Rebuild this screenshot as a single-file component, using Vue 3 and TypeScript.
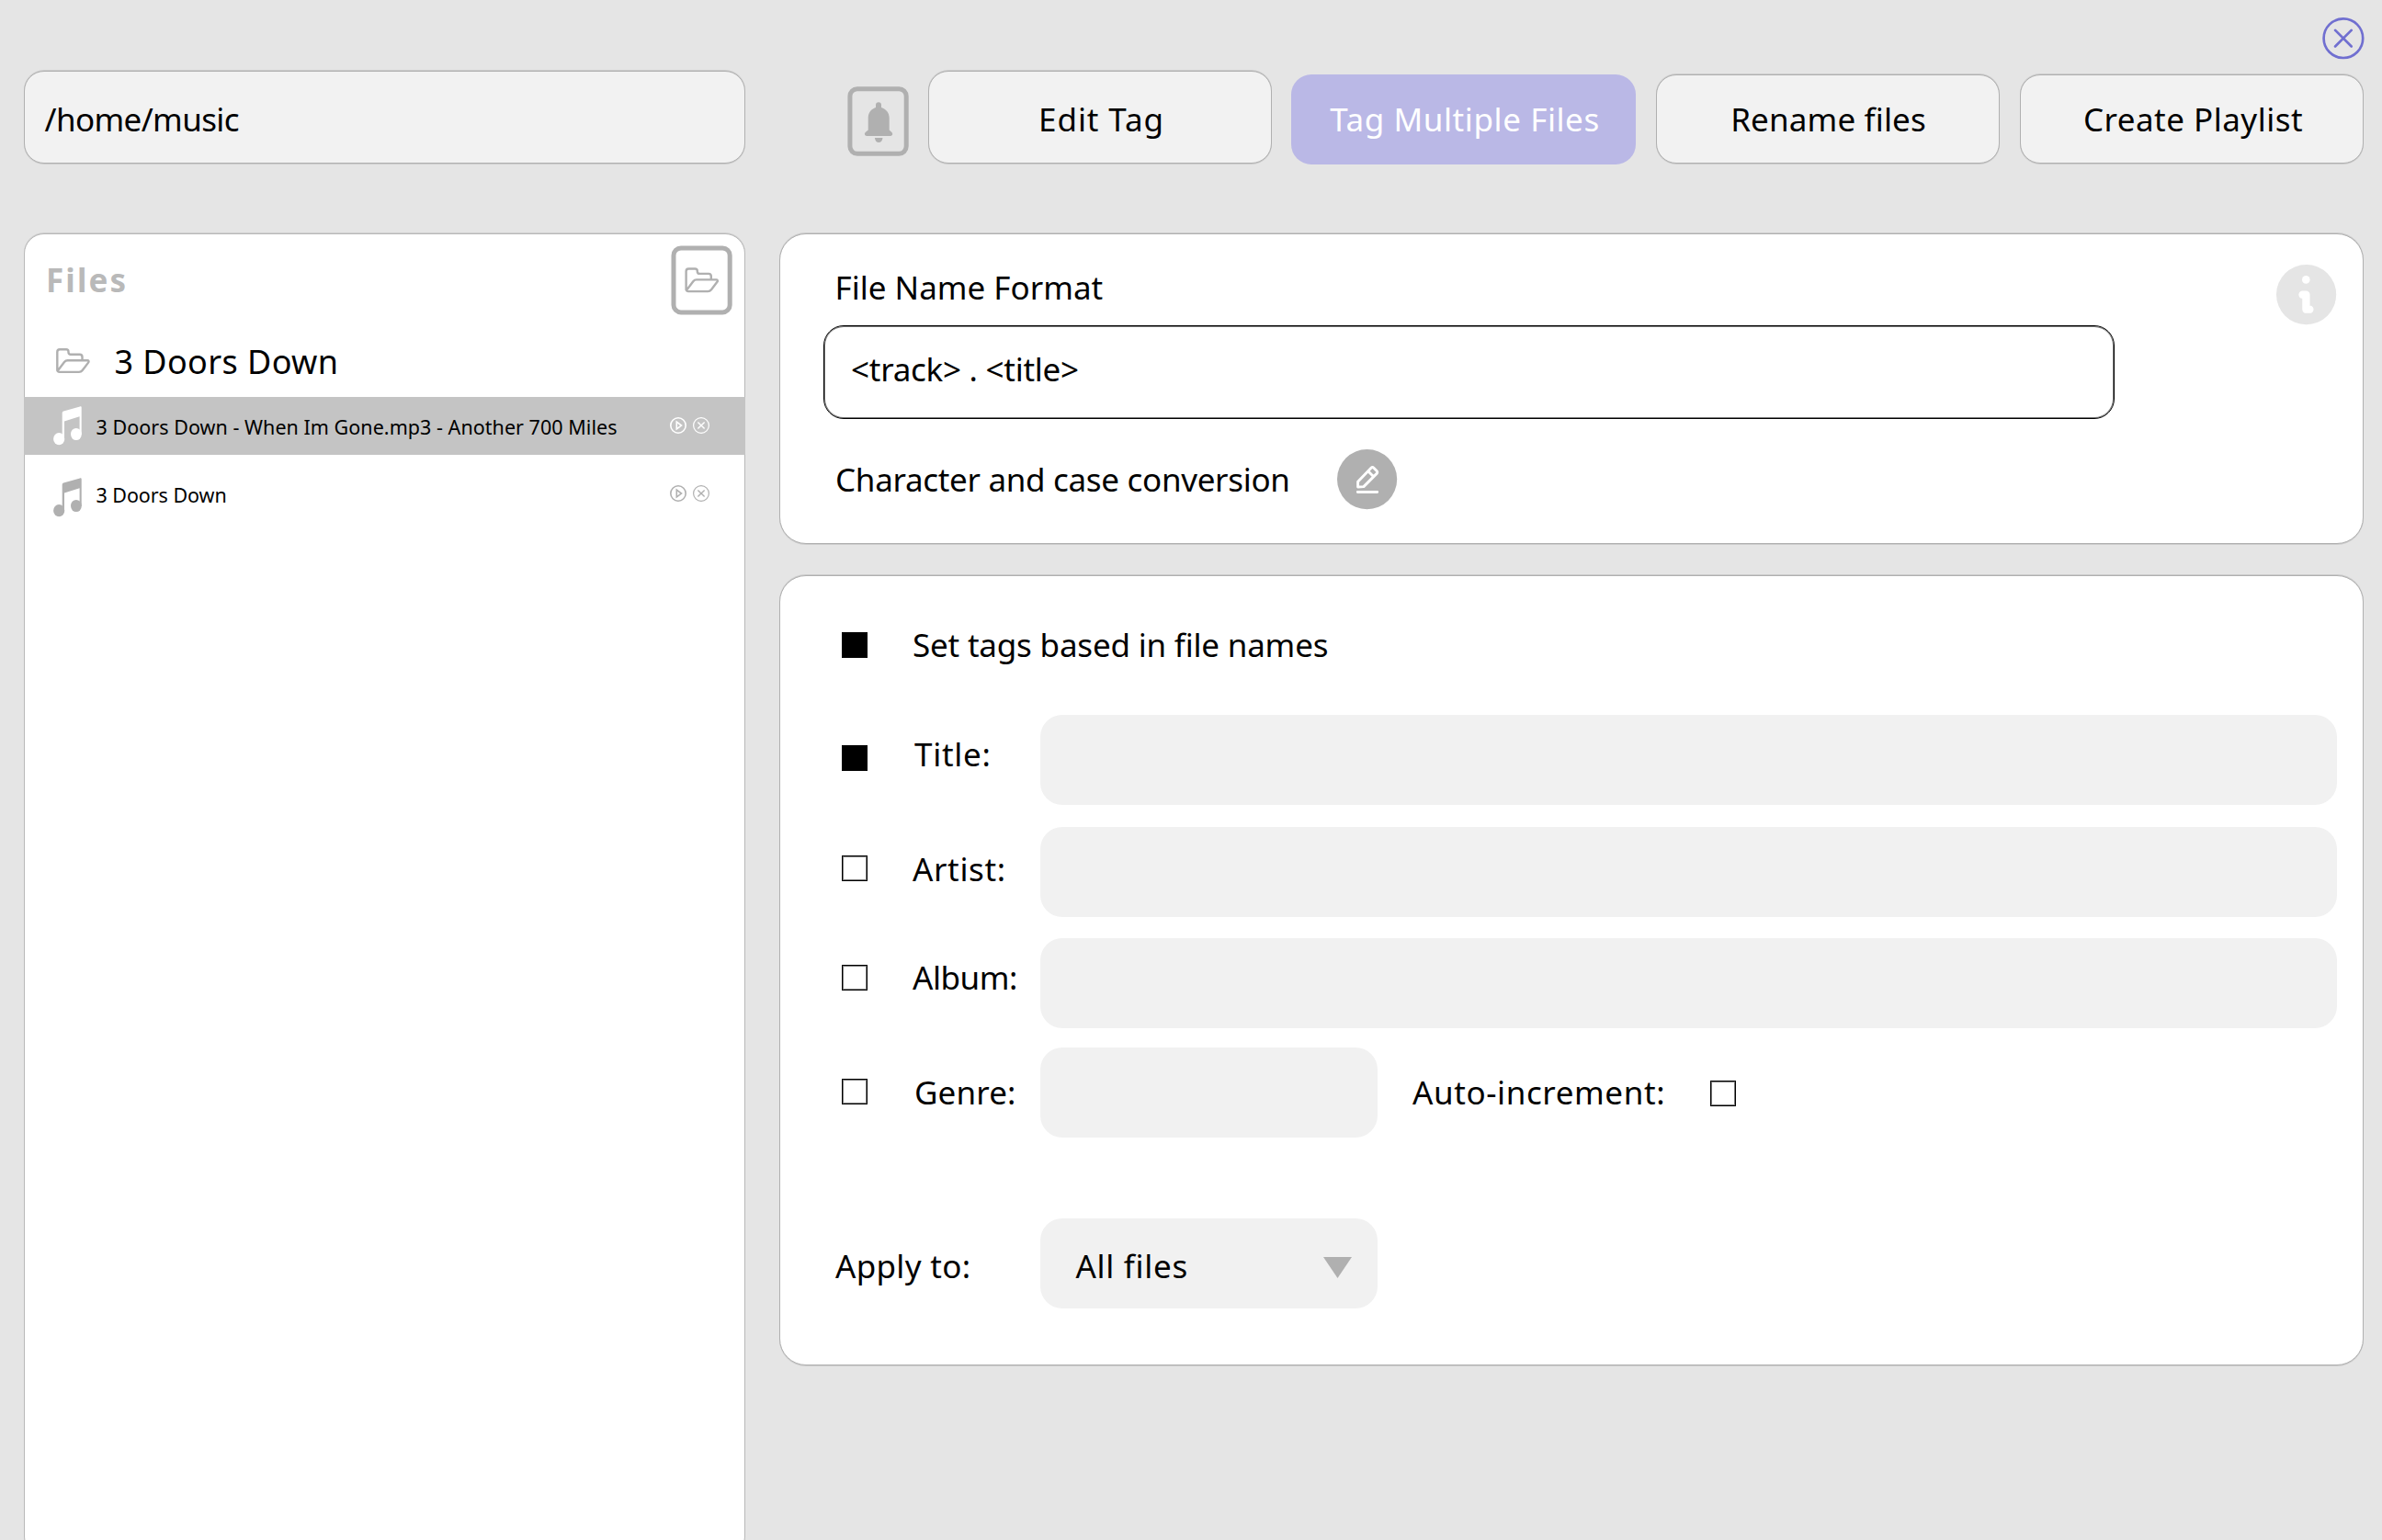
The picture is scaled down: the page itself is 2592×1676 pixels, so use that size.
<script setup lang="ts">
import { ref } from 'vue'

interface Tab {
  id: string
  label: string
}

interface Song {
  id: string
  name: string
}

interface TagField {
  id: string
  label: string
  checked: boolean
}

const path = ref('/home/music')
const format = ref('<track> . <title>')
const activeTab = ref('multi')
const selectedSong = ref('gone')

const tabs: Tab[] = [
  { id: 'edit', label: 'Edit Tag' },
  { id: 'multi', label: 'Tag Multiple Files' },
  { id: 'rename', label: 'Rename files' },
  { id: 'playlist', label: 'Create Playlist' },
]

const songs: Song[] = [
  { id: 'gone', name: '3 Doors Down - When Im Gone.mp3 - Another 700 Miles' },
  { id: 'down', name: '3 Doors Down' },
]

const fields = ref<TagField[]>([
  { id: 'title', label: 'Title:', checked: true },
  { id: 'artist', label: 'Artist:', checked: false },
  { id: 'album', label: 'Album:', checked: false },
])

const folderPath =
  'M1.3 24.5V4c0-1.6 1-2.7 2.7-2.7h7c1.6 0 2.5.9 2.5 2.5v.6c0 1.6.9 2.3 2.3 2.3h10c1.8 0 2.7 1 2.7 2.7v4M2 24.2l7-9.1c1-1.3 2-1.9 3.6-1.9H34c1.6 0 2 1.2 1.1 2.4l-6.4 8.4c-1 1.3-2.1 1.9-3.7 1.9H3.8c-1.6 0-2.5-.9-2.5-2.5'
</script>

<template>
  <div class="app">
    <header class="titlebar">
      <svg class="close" width="46" height="46" viewBox="0 0 46 46">
        <circle cx="22.9" cy="22.7" r="21.3" />
        <path d="M14.1 13.9l17.6 17.6M31.7 13.9L14.1 31.5" />
      </svg>
    </header>

    <nav class="toolbar">
      <div class="path ring">{{ path }}</div>
      <svg class="bell" width="67" height="76" viewBox="0 0 67 76">
        <rect x="2.9" y="2.7" width="61.3" height="70.6" rx="8" />
        <path
          d="M31 23v-2.7a3 3 0 0 1 6 0V23c5.3 1.6 8.7 6 8.7 11.500v13l2.7 2.6c1.6 1.6.6 3.9-1.3 3.9H21c-1.9 0-2.9-2.3-1.3-3.9l3-2.6v-13c0-5.500 3.2-10 8.3-11.500zM29.9 56h8.6c-.3 3-1.9 5-4.3 5s-4-2-4.3-5z"
        />
      </svg>
      <div
        v-for="tab in tabs"
        :key="tab.id"
        class="tab"
        :class="[tab.id, tab.id === activeTab ? 'active' : 'ring']"
      >
        {{ tab.label }}
      </div>
    </nav>

    <main class="main">
      <aside class="files">
        <div class="files-head">
          <h2>Files</h2>
          <svg class="open" width="67" height="76" viewBox="0 0 67 76">
            <rect x="3" y="2.9" width="61.2" height="70" rx="8" />
            <path transform="translate(15.3 24.2)" :d="folderPath" />
          </svg>
        </div>
        <div class="folder">
          <svg width="38" height="28" viewBox="0 0 38 28"><path :d="folderPath" /></svg>
          <span>3 Doors Down</span>
        </div>
        <div v-for="song in songs" :key="song.id" class="song" :class="{ selected: song.id === selectedSong }">
          <svg class="note" width="31" height="43" viewBox="0 0 31 43">
            <path d="M9.7 7.500c0-1 .5-1.7 1.500-2.1L29 .4c1-.3 1.7.2 1.7 1.2V31h-2.1V11.3L12 16.500V36H9.7z" />
            <ellipse cx="24.9" cy="30.500" rx="5.9" ry="6.6" />
            <ellipse cx="6.2" cy="35.7" rx="6.1" ry="6.6" />
          </svg>
          <span class="name">{{ song.name }}</span>
          <span class="actions">
            <svg width="18" height="18" viewBox="0 0 18 18">
              <circle cx="9" cy="9" r="8.2" stroke-width="1.6" />
              <path stroke-width="1.6" d="M7.3 5.2v7.8l5.2-3.9z" />
            </svg>
            <svg width="18" height="18" viewBox="0 0 18 18">
              <circle cx="9" cy="9" r="8.4" stroke-width="1.2" />
              <path stroke-width="1.400" d="M5.4 5.4l7.2 7.2M12.6 5.4l-7.2 7.2" />
            </svg>
          </span>
        </div>
      </aside>

      <section class="cards">
        <div class="card ring format-card">
          <div class="format-col">
            <div class="label format-label">File Name Format</div>
            <div class="format-input">{{ format }}</div>
            <div class="convert">
              <span class="label">Character and case conversion</span>
              <svg width="66" height="66" viewBox="0 0 66 66">
                <circle cx="32.6" cy="32.6" r="32.6" fill="#b0b0b0" />
                <path
                  class="pencil"
                  d="M22.6 41v-5.8L37 20.3c.9-.9 2-.9 2.9 0l3.2 3.2c.9.9.9 2 0 2.9L28.9 40.6zM33.7 23.7l6 6M22.3 46.500h21.4"
                />
              </svg>
            </div>
          </div>
          <svg class="info" width="66" height="66" viewBox="0 0 66 66">
            <circle cx="32.6" cy="32.6" r="32.6" fill="#e5e5e5" />
            <circle cx="32.3" cy="16.4" r="4.3" fill="#fff" />
            <path d="M28.500 32.7h3.9v16h4" />
          </svg>
        </div>

        <div class="card ring tags-card">
          <div class="row based">
            <span class="check on"></span>
            <span class="label">Set tags based in file names</span>
          </div>
          <div v-for="field in fields" :key="field.id" class="row" :class="field.id">
            <span class="check" :class="{ on: field.checked }"></span>
            <span class="label">{{ field.label }}</span>
            <div class="field"></div>
          </div>
          <div class="row genre">
            <span class="check"></span>
            <span class="label">Genre:</span>
            <div class="field short"></div>
            <span class="label auto">Auto-increment:</span>
            <span class="check auto-check"></span>
          </div>
          <div class="row apply">
            <span class="label">Apply to:</span>
            <div class="field short select">
              <span>All files</span>
              <svg width="31" height="23" viewBox="0 0 31 23"><path d="M0 0h31L15.500 23z" /></svg>
            </div>
          </div>
        </div>
      </section>
    </main>
  </div>
</template>

<style>
body {
  background: #e5e5e5;
}
</style>

<style scoped>
.app {
  box-sizing: border-box;
  width: 2592px;
  height: 1676px;
  overflow: hidden;
  background: #e5e5e5;
  color: #000;
  font: 35px/50px "Noto Sans", "Open Sans", sans-serif;
  white-space: nowrap;
}
.app * {
  box-sizing: border-box;
}
svg {
  display: block;
  flex: none;
}
.ring {
  border: 1px solid #b0b0b0;
  box-shadow: 0 1px 0 #cccccc, 0 -1px 0 #cccccc;
}

.titlebar {
  display: flex;
  justify-content: flex-end;
  height: 77px;
  padding: 19px 19px 0 0;
}
.close {
  fill: none;
  stroke: #706fd0;
  stroke-width: 2.7;
  stroke-linecap: round;
}

.toolbar {
  display: flex;
  align-items: flex-start;
  height: 177px;
  padding-left: 26px;
}
.path {
  width: 785px;
  height: 101px;
  padding: 27px 0 0 21.5px;
  border-radius: 22px;
  background: #f2f2f2;
  letter-spacing: -0.62px;
}
.bell {
  margin: 17px 21px 0 111px;
  fill: #b0b0b0;
}
.bell rect,
.open rect {
  fill: none;
  stroke: #b0b0b0;
  stroke-width: 5;
}
.tab {
  width: 374px;
  height: 97px;
  margin: 4px 22px 0 0;
  padding: 23px 0 0 1px;
  border-radius: 22px;
  background: #f2f2f2;
  text-align: center;
}
.tab.edit {
  height: 101px;
  margin: 0 21px 0 0;
  padding: 27px 0 0 3px;
  letter-spacing: 0.9px;
}
.tab.active {
  width: 375px;
  height: 98px;
  padding: 24px 0 0 3px;
  background: #bab8e6;
  color: #fff;
}
.tab.multi {
  letter-spacing: 0.58px;
}
.tab.rename {
  letter-spacing: 0.15px;
}
.tab.playlist {
  margin-right: 0;
  padding-left: 3px;
  letter-spacing: 0.49px;
}

.main {
  display: flex;
  align-items: flex-start;
  padding-left: 26px;
}
.files {
  width: 785px;
  height: 1440px;
  margin-right: 37px;
  border: 1px solid #b8b8b8;
  border-radius: 22px;
  box-shadow: 0 -1px 0 #cfcfcf;
  background: #fff;
}
.files-head {
  display: flex;
  justify-content: space-between;
  height: 90px;
  padding: 11.5px 13px 0 23px;
}
.files-head h2 {
  margin: 13.5px 0 0;
  font-size: 35px;
  line-height: 50px;
  color: #b9b9b9;
  letter-spacing: 2.1px;
}
.open path,
.folder path {
  fill: none;
  stroke: #b0b0b0;
  stroke-width: 2.4;
  stroke-linejoin: round;
}
.folder {
  display: flex;
  align-items: flex-start;
  gap: 25.5px;
  height: 87px;
  padding: 24px 0 0 34px;
  font-size: 36px;
  letter-spacing: 0.4px;
}
.folder svg {
  margin-top: 10px;
}
.song {
  display: flex;
  align-items: flex-start;
  height: 63px;
  margin: 0 -1px 10px;
  padding: 0 39px 0 32px;
  font-size: 21.5px;
  line-height: 30px;
}
.song.selected {
  background: #c4c4c4;
}
.note {
  margin-top: 15px;
  fill: #b0b0b0;
}
.selected .note {
  margin-top: 10px;
  fill: #fff;
}
.name {
  flex: 1;
  margin: 19px 0 0 15.5px;
  letter-spacing: -0.06px;
}
.selected .name {
  margin-top: 18px;
  letter-spacing: 0.04px;
}
.actions {
  display: flex;
  gap: 7.4px;
  margin-top: 22.8px;
  fill: none;
  stroke: #b0b0b0;
}
.selected .actions {
  margin-top: 22.4px;
  stroke: #fff;
}

.cards {
  width: 1724px;
}
.card {
  border-radius: 29px;
  background: #fff;
}
.format-card {
  display: flex;
  justify-content: space-between;
  height: 338px;
  margin-bottom: 34px;
  padding: 33px 28px 0 47px;
}
.format-label {
  padding-left: 12.5px;
}
.format-input {
  width: 1405px;
  height: 102px;
  margin-top: 16px;
  padding: 22px 0 0 29px;
  border: 1px solid #000;
  border-radius: 22px;
  box-shadow: inset 0 0 0 1px #777;
  letter-spacing: -0.26px;
}
.convert {
  display: flex;
  align-items: flex-start;
  padding: 33px 0 0 13px;
}
.convert .label {
  width: 546px;
  margin-top: 8px;
  letter-spacing: -0.31px;
}
.pencil {
  fill: none;
  stroke: #fff;
  stroke-width: 2.9;
  stroke-linecap: round;
  stroke-linejoin: round;
}
.info path {
  fill: none;
  stroke: #fff;
  stroke-width: 8.3;
  stroke-linecap: round;
  stroke-linejoin: round;
}

.tags-card {
  height: 860px;
  padding-left: 67px;
}
.row {
  display: flex;
  align-items: flex-start;
  height: 98px;
}
.check {
  width: 28px;
  height: 28px;
  margin-right: 49px;
  border: 1px solid #000;
  box-shadow: inset 0 0 0 1px #777;
}
.check.on {
  background: #000;
  box-shadow: none;
}
.row .label {
  width: 139px;
}
.field {
  width: 1410.5px;
  height: 98px;
  border-radius: 24px;
  background: #f1f1f1;
}
.field.short {
  width: 367px;
}
.based {
  height: 151px;
}
.based .check {
  margin-top: 61px;
}
.based .label {
  margin-top: 50px;
  letter-spacing: -0.2px;
}
.title .check {
  margin-top: 33px;
}
.title .label {
  margin-top: 18px;
  padding-left: 2px;
  letter-spacing: 0.74px;
}
.artist {
  margin-top: 24px;
}
.artist .check {
  margin-top: 31px;
}
.artist .label {
  margin-top: 21px;
  letter-spacing: 0.64px;
}
.album {
  margin-top: 23px;
}
.album .check {
  margin-top: 29px;
}
.album .label {
  margin-top: 18px;
  letter-spacing: -0.45px;
}
.genre {
  margin-top: 21px;
}
.genre .check {
  margin-top: 34px;
}
.genre .label {
  margin-top: 23.5px;
  padding-left: 2px;
  letter-spacing: 0.13px;
}
.genre .auto {
  width: 324px;
  margin-left: 38px;
  padding-left: 0;
  letter-spacing: 0.6px;
}
.genre .auto-check {
  margin: 36px 0 0;
}
.apply {
  margin-top: 88px;
}
.apply .label {
  width: 223px;
  margin: 27px 0 0 -7px;
  letter-spacing: 0.31px;
}
.select {
  display: flex;
  justify-content: space-between;
  align-items: flex-start;
  padding: 27px 28.5px 0 38.5px;
  letter-spacing: 0.7px;
}
.select svg {
  margin-top: 15px;
  fill: #b0b0b0;
}
</style>
